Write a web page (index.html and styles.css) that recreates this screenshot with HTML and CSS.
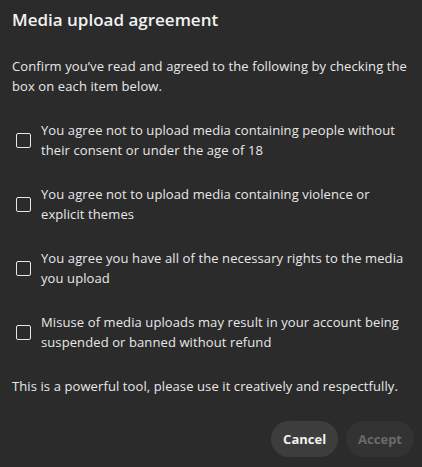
FILE: index.html
```html
<!DOCTYPE html>
<html>
<head>
<meta charset="utf-8">
<link rel="stylesheet" href="styles.css">
</head>
<body>
<div class="dialog">
  <h1 class="title">Media upload agreement</h1>
  <p class="intro">Confirm you’ve read and agreed to the following by checking the box on each item below.</p>
  <ul class="items">
    <li class="item"><span class="box"></span><span class="label">You agree not to upload media containing people without their consent or under the age of 18</span></li>
    <li class="item"><span class="box"></span><span class="label">You agree not to upload media containing violence or explicit themes</span></li>
    <li class="item"><span class="box"></span><span class="label">You agree you have all of the necessary rights to the media you upload</span></li>
    <li class="item"><span class="box"></span><span class="label">Misuse of media uploads may result in your account being suspended or banned without refund</span></li>
  </ul>
  <p class="note">This is a powerful tool, please use it creatively and respectfully.</p>
  <div class="actions">
    <button class="btn btn-cancel">Cancel</button>
    <button class="btn btn-accept">Accept</button>
  </div>
</div>
</body>
</html>
```
FILE: styles.css
```css
html, body {
  margin: 0;
  padding: 0;
  background: #2b2b2b;
}
body {
  font-family: "Open Sans", "Noto Sans", sans-serif;
  color: #e8e8e8;
  width: 422px;
  height: 467px;
  overflow: hidden;
}
.dialog {
  padding: 8px 8px 10px 12px;
  display: flex;
  flex-direction: column;
}
.title {
  margin: 0;
  font-size: 17px;
  font-weight: 600;
  line-height: 24px;
  color: #f2f2f2;
}
.intro {
  margin: 24px 0 0 0;
  font-size: 13px;
  line-height: 20px;
  letter-spacing: 0.1px;
}
.items {
  list-style: none;
  margin: 24px 0 0 0;
  padding: 0;
  display: flex;
  flex-direction: column;
  gap: 24px;
}
.item {
  display: flex;
  align-items: center;
  font-size: 13px;
  line-height: 20px;
  letter-spacing: 0.1px;
}
.box {
  flex: none;
  width: 13px;
  height: 13px;
  border: 1.5px solid #e6e6e6;
  border-radius: 2px;
  margin: 0 10px 0 4px;
}
.label {
  flex: 1;
}
.note {
  margin: 24px 0 0 0;
  font-size: 13px;
  line-height: 20px;
  letter-spacing: 0.1px;
}
.actions {
  margin-top: 25px;
  display: flex;
  justify-content: flex-end;
  gap: 8px;
}
.btn {
  font-family: inherit;
  font-size: 13px;
  font-weight: 700;
  height: 36px;
  border: none;
  border-radius: 18px;
  padding: 0 12px;
  min-width: 66px;
}
.btn-cancel {
  background: #3d3d3d;
  color: #f0f0f0;
}
.btn-accept {
  background: #333333;
  color: #6a6a6a;
}
```
